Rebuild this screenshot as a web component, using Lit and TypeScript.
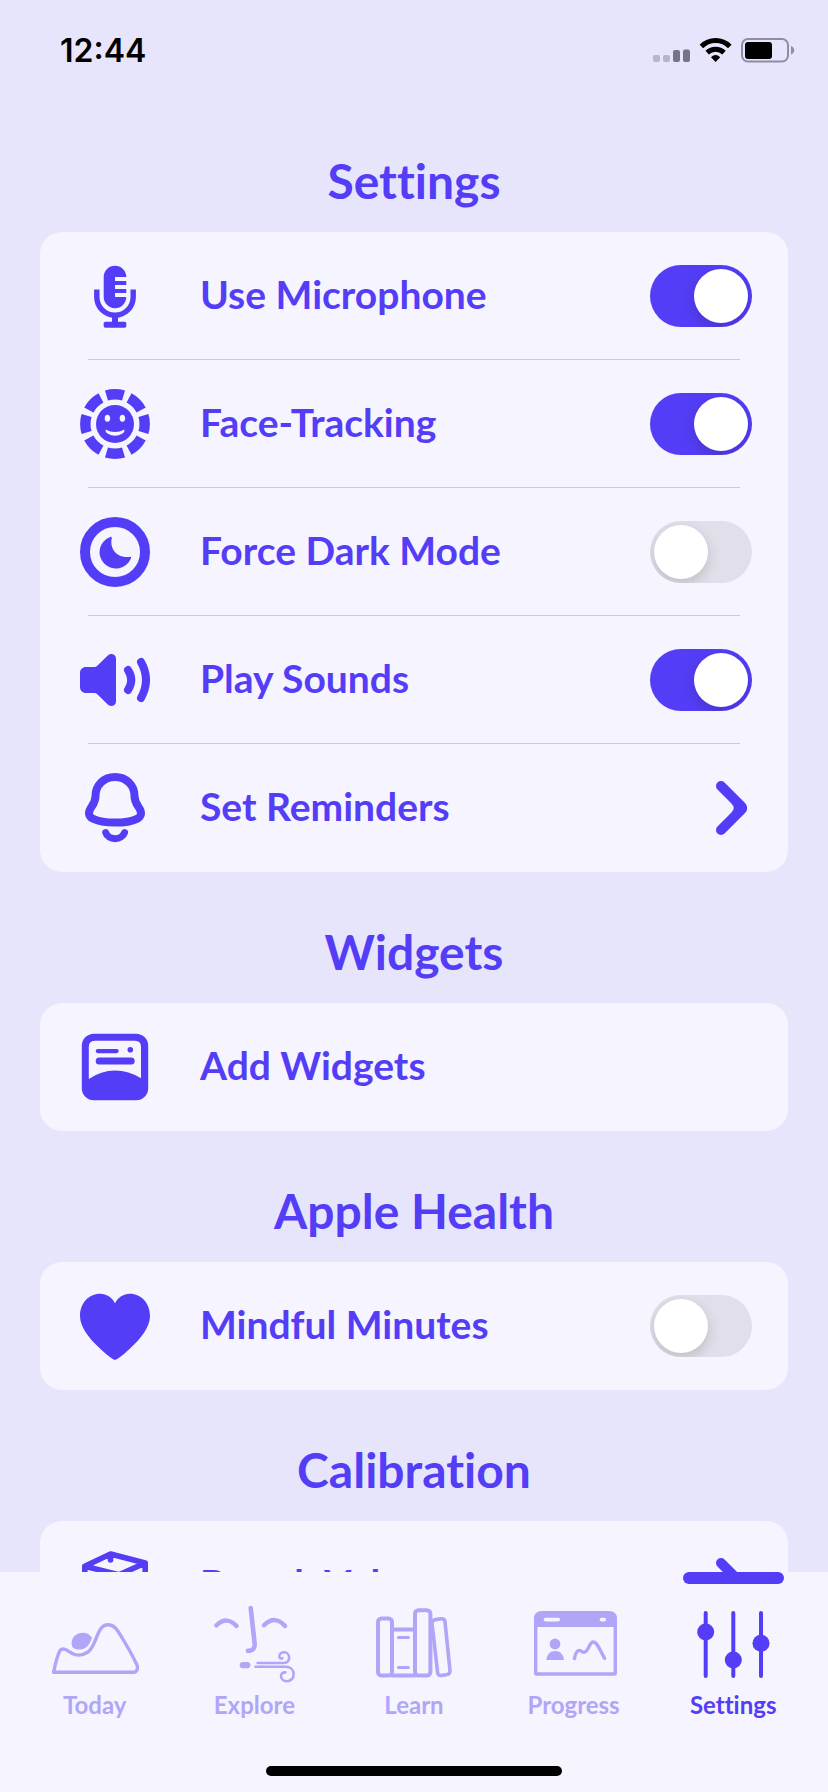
import { LitElement, html, svg, css, nothing, type TemplateResult } from "lit";
import { customElement, property, state } from "lit/decorators.js";
import { classMap } from "lit/directives/class-map.js";

type IconName = "mic" | "face" | "moon" | "sound" | "bell" | "widget" | "heart" | "box";
type TabName = "today" | "explore" | "learn" | "progress" | "settings";

interface Row {
  id: string;
  label: string;
  icon: IconName;
  kind: "toggle" | "link" | "action";
  on?: boolean;
}

interface Section {
  title: string;
  rows: Row[];
}

const SECTIONS: Section[] = [
  {
    title: "Settings",
    rows: [
      { id: "microphone", label: "Use Microphone", icon: "mic", kind: "toggle", on: true },
      { id: "face", label: "Face-Tracking", icon: "face", kind: "toggle", on: true },
      { id: "dark", label: "Force Dark Mode", icon: "moon", kind: "toggle", on: false },
      { id: "sounds", label: "Play Sounds", icon: "sound", kind: "toggle", on: true },
      { id: "reminders", label: "Set Reminders", icon: "bell", kind: "link" },
    ],
  },
  {
    title: "Widgets",
    rows: [{ id: "widgets", label: "Add Widgets", icon: "widget", kind: "action" }],
  },
  {
    title: "Apple Health",
    rows: [{ id: "mindful", label: "Mindful Minutes", icon: "heart", kind: "toggle", on: false }],
  },
  {
    title: "Calibration",
    rows: [{ id: "breath", label: "Breath Volume", icon: "box", kind: "link" }],
  },
];

const TABS: { id: TabName; label: string }[] = [
  { id: "today", label: "Today" },
  { id: "explore", label: "Explore" },
  { id: "learn", label: "Learn" },
  { id: "progress", label: "Progress" },
  { id: "settings", label: "Settings" },
];

// Row icons, each on a 70 x 70 grid.
const ROW_ICONS: Record<IconName, TemplateResult> = {
  mic: svg`
    <path class="fill" d="M23.7 16A11.3 11.3 0 0 1 46.3 16H35V20H46.3V24H35V28H46.3V32H35V36H46.3A11.3 11.3 0 0 1 23.7 35.7Z"/>
    <path class="line" stroke-width="5.4" stroke-linecap="butt" d="M16.8 28.5V36a18.2 18.2 0 0 0 36.4 0V28.5"/>
    <path class="fill" d="M32 55H38V62H32Z"/>
    <rect class="fill" x="23.7" y="60.7" width="22.6" height="6" rx="1.6"/>`,
  face: svg`
    <circle class="line" cx="35" cy="35" r="29.7" stroke-width="10.4" pathLength="360" stroke-linecap="butt"
      stroke-dasharray="33.5 11.5" stroke-dashoffset="16.75"/>
    <circle class="fill" cx="35" cy="35" r="19"/>
    <ellipse class="hole" cx="27.4" cy="29.3" rx="2.7" ry="3.5"/>
    <ellipse class="hole" cx="42.4" cy="29.3" rx="2.7" ry="3.5"/>
    <path class="hole" d="M25.6 40.4Q35 45.6 44.4 40.4Q45 42.6 42.5 44.5Q35 49 27.5 44.5Q25 42.6 25.6 40.4Z"/>`,
  moon: svg`
    <circle class="line" cx="35" cy="35" r="30" stroke-width="10"/>
    <path class="fill" d="M30.3 19.9C31.6 19.5 32 20.4 31.7 21.6C29.5 32.5 37.5 41.6 49.6 39.9C50.8 39.7 51.4 40.3 51 41.2A16.3 16.3 0 1 1 30.3 19.9Z"/>`,
  sound: svg`
    <path class="fill" d="M6 22H14.5C15.5 22 16.3 21.6 17 21L27.5 10.7C30.5 7.5 36 9 36 13.5V56.5C36 61 30.5 62.5 27.5 59.3L17 49C16.3 48.3 15.5 48 14.5 48H6C2.5 48 0 45.5 0 42V28C0 24.5 2.5 22 6 22Z"/>
    <path class="line" stroke-width="8" d="M48 25Q54.5 35 48 45"/>
    <path class="line" stroke-width="8" d="M61 17Q71 35 61 53"/>`,
  bell: svg`
    <path class="line" stroke-width="8" d="M35 4C24 4 15.5 12 15.5 23C15.5 29 13 31.5 10.5 35.5C8 40 8.5 43.5 13 45.8C19 48.8 27 49.6 35 49.6C43 49.6 51 48.8 57 45.8C61.5 43.5 62 40 59.5 35.5C57 31.5 54.5 29 54.5 23C54.5 12 46 4 35 4Z"/>
    <path class="line" stroke-width="7" d="M25.7 59.5C28 67.7 42 67.7 44.6 59.5"/>`,
  widget: svg`
    <rect class="fill" x="1.8" y="1.8" width="66.4" height="66.4" rx="12"/>
    <path class="hole" d="M8.8 14.7Q8.8 8.7 14.8 8.7H55Q61 8.7 61 14.7V46.3Q49 38.4 35 38.4Q21 38.4 8.8 47Z"/>
    <rect class="fill" x="15.7" y="17" width="23" height="4.2" rx="2.1"/>
    <rect class="fill" x="15.7" y="25.4" width="39" height="7" rx="3.5"/>
    <circle class="fill" cx="50.3" cy="17.8" r="2.8"/>`,
  heart: svg`
    <path class="fill" d="M35 69C34 69 28 65 21 58.5C9 47.5 0 36 0 25C0 12 9 2.7 20 2.7C27 2.7 32.5 7 35 12.3C37.5 7 43 2.7 50 2.7C61 2.7 70 12 70 25C70 36 61 47.5 49 58.5C42 65 36 69 35 69Z"/>`,
  box: svg`
    <path class="line" stroke-width="5.6" d="M30.5 4L65.2 13L39 24.8L4.8 16.2ZM4.8 16.2V54L39 66V24.8M65.2 13V52L39 66M30.5 4V10"/>`,
};

// Tab icons, each on an 88 x 84 grid.
const TAB_ICONS: Record<TabName, TemplateResult> = {
  today: svg`
    <path class="line" stroke-width="3.4" d="M2.6 72.2C4.5 63 6.5 55 9 50.5C11.5 47.5 14.5 48.8 18 51.5C24 56 31 56 37 52C46 45.5 45.5 24.8 57 24.8C64 24.8 67 31 71.5 38.5C77 47.5 82 56.5 86 65C87.5 69 85.5 72.2 82.5 72.2Z"/>
    <path class="fill" d="M20.7 42C21.5 36 26 32.8 31.5 32.7C36 32.7 39 34.5 41 37.8C39 44 35.5 49.6 28.5 49.6C22.5 49.6 20 47 20.7 42Z"/>`,
  explore: svg`
    <path class="line" stroke-width="4.4" d="M6.4 25.3Q17 15.5 26.5 26M54 25.3Q65 14.5 75 26"/>
    <path class="line" stroke-width="4.6" d="M40.7 8L44.6 43Q45.5 50.5 38 50.8"/>
    <rect class="fill" x="29.7" y="62" width="10.6" height="6.2" rx="3"/>
    <path class="line" stroke-width="2.6" d="M47.7 63H74C77.5 63 79.2 60.4 79.2 57.6C79.2 54.6 76.8 52.3 74 52.3C71.4 52.3 69.3 54 69.3 56.4C69.3 58.2 71 59 72.4 58.2"/>
    <path class="line" stroke-width="2.6" d="M45.5 66.8H75.5C80.5 66.8 83.7 70 83.7 74.2C83.7 78.4 80.6 81.2 76.8 81.2C73.2 81.2 71 78.6 71 76C71 73.6 72.8 72 75.4 72.4"/>`,
  learn: svg`
    <rect class="line" stroke-width="4" x="8" y="18.4" width="14" height="57.2" rx="3.6"/>
    <path class="line" stroke-width="4" d="M22 29.4H45M22 75.6H45"/>
    <path class="line" stroke-width="3" d="M28.4 37.4H38.4M28.4 67.4H38.4"/>
    <rect class="line" stroke-width="4" x="45" y="10.2" width="15.4" height="65.4" rx="3.6"/>
    <path class="line" stroke-width="3.6" d="M65.6 19.6L71.2 18.8Q74.6 18.6 75 21.8L80 70.4Q80.2 73.8 77.4 74.4L71.6 75.4Q68 75.8 67.6 72.6L62 23.4Q62.2 20.2 65.6 19.6Z"/>`,
  progress: svg`
    <path class="fill" d="M4 19Q4 11 12 11H79Q87 11 87 19V27H4Z"/>
    <rect class="line" stroke-width="3.4" x="5.7" y="20" width="79.6" height="54" rx="1"/>
    <rect class="hole" x="13.7" y="17.8" width="16.4" height="3.6" rx="1.8"/>
    <rect class="hole" x="69.7" y="17.8" width="6.4" height="3.6" rx="1.8"/>
    <circle class="fill" cx="25" cy="44" r="5.4"/>
    <path class="fill" d="M16.4 60C16.8 54.4 20.4 51 25.2 51C30 51 33.6 54.4 34 60Z"/>
    <path class="line" stroke-width="3.4" d="M44.4 58.6C45.4 54 46.4 50.6 49 50.4C51.4 50.2 52 52.8 54.6 52.2C59 51 59 42 63.4 42C67 42 69 48.4 74.6 58.4"/>`,
  settings: svg`
    <path class="line" stroke-width="4" d="M16.7 13V76M44.3 13V76M72 13V76"/>
    <circle class="fill" cx="16.7" cy="32" r="8.5"/>
    <circle class="fill" cx="44.3" cy="60" r="8.5"/>
    <circle class="fill" cx="72" cy="43.3" r="8.5"/>`,
};

const iconStyles = css`
  .fill {
    fill: currentColor;
  }
  .line {
    fill: none;
    stroke: currentColor;
    stroke-linejoin: round;
  }
  .line:not([stroke-linecap]) {
    stroke-linecap: round;
  }
  .hole {
    fill: var(--surface);
  }
`;

@customElement("settings-row")
class SettingsRow extends LitElement {
  static styles = [
    iconStyles,
    css`
      :host {
        display: block;
      }
      .row {
        box-sizing: border-box;
        width: 100%;
        min-height: 128px;
        display: grid;
        grid-template-columns: 70px 1fr auto;
        column-gap: 50px;
        align-items: center;
        padding: 0 36px 0 40px;
        border: 0;
        background: none;
        color: inherit;
        font: inherit;
        text-align: left;
        text-decoration: none;
        cursor: pointer;
      }
      .icon {
        display: block;
        width: 70px;
        height: 70px;
      }
      .label {
        padding-bottom: 4px;
        white-space: nowrap;
      }
      .switch {
        appearance: none;
        box-sizing: border-box;
        width: 102px;
        height: 62px;
        margin: 0;
        padding: 4px;
        border-radius: 31px;
        background: var(--track);
        display: flex;
        justify-content: flex-start;
        overflow: hidden;
        cursor: pointer;
      }
      .switch::before {
        content: "";
        width: 54px;
        height: 54px;
        border-radius: 50%;
        background: #fff;
        box-shadow: 0 5px 14px rgba(0, 0, 0, 0.16);
      }
      .switch:checked {
        background: var(--accent);
        justify-content: flex-end;
      }
      .chevron {
        display: block;
        width: 32px;
        height: 54px;
        margin-right: 4px;
      }
    `,
  ];

  @property({ attribute: false }) row!: Row;

  private body(end: unknown) {
    return html`
      <svg class="icon" viewBox="0 0 70 70" aria-hidden="true">${ROW_ICONS[this.row.icon]}</svg>
      <span class="label">${this.row.label}</span>
      ${end}
    `;
  }

  render() {
    const { id, kind, on } = this.row;
    if (kind === "toggle") {
      return html`<label class="row" for=${id}>
        ${this.body(html`<input class="switch" id=${id} type="checkbox" role="switch" .checked=${!!on} />`)}
      </label>`;
    }
    if (kind === "link") {
      return html`<a class="row" href="#${id}">
        ${this.body(html`<svg class="chevron" viewBox="0 0 32 54" aria-hidden="true">
          <path class="line" stroke-width="10" d="M5 5L25.5 25.5Q27 27 25.5 28.5L5 49" />
          <path class="fill" d="M15.5 22.4Q20 27 15.5 31.6L24 27Z" />
        </svg>`)}
      </a>`;
    }
    return html`<button class="row" type="button">${this.body(nothing)}</button>`;
  }
}

@customElement("app-root")
class AppRoot extends LitElement {
  static styles = [
    iconStyles,
    css`
      :host {
        --page: #e7e5fc;
        --surface: #f5f4ff;
        --accent: #543df6;
        --muted: #b0a6f8;
        --rule: #cbc8e6;
        --track: #e1e0ea;
        display: flex;
        flex-direction: column;
        height: 100vh;
        background: var(--page);
        color: var(--accent);
        font-family: Lato, "Open Sans", sans-serif;
        font-weight: 700;
        font-variant-ligatures: none;
      }
      .status {
        flex: none;
        box-sizing: border-box;
        height: 101px;
        display: flex;
        align-items: center;
        justify-content: space-between;
        padding: 0 33px 0 60px;
        color: #000;
      }
      .time {
        font: 600 32px/40px Inter, sans-serif;
      }
      .signals {
        display: block;
        width: 142px;
        height: 28px;
      }
      .weak {
        fill: #b7b5c9;
      }
      .strong {
        fill: #757388;
      }
      .shell {
        fill: none;
        stroke: #8f8da1;
        stroke-width: 2;
      }
      .nub {
        fill: #8f8da1;
      }
      main {
        flex: 1;
        min-height: 0;
        overflow-y: auto;
        scrollbar-width: none;
        padding: 0 40px;
      }
      .title {
        margin: 0;
        padding: 50px 0 21px;
        font-size: 48px;
        line-height: 60px;
        font-weight: 700;
        text-align: center;
      }
      .card {
        margin: 0;
        padding: 0;
        list-style: none;
        border-radius: 22px;
        background: var(--surface);
        font-size: 39px;
        line-height: 48px;
      }
      .item:not(:last-child) {
        background: linear-gradient(var(--rule), var(--rule)) no-repeat bottom / calc(100% - 96px) 1px;
      }
      .bar {
        flex: none;
        background: var(--surface);
        padding: 0 15px 16px;
      }
      .tabs {
        display: grid;
        grid-template-columns: repeat(5, 1fr);
      }
      .tab {
        position: relative;
        display: flex;
        flex-direction: column;
        align-items: center;
        gap: 6px;
        padding-top: 28px;
        color: var(--muted);
        font-size: 24px;
        line-height: 30px;
        text-decoration: none;
      }
      .tab.current {
        color: var(--accent);
      }
      .tab.current::before {
        content: "";
        position: absolute;
        top: 0;
        width: 101px;
        height: 12px;
        border-radius: 6px;
        background: var(--accent);
      }
      .glyph {
        display: block;
        width: 88px;
        height: 84px;
      }
      .home {
        width: 296px;
        height: 10px;
        margin: 46px auto 0;
        border-radius: 5px;
        background: #000;
      }
    `,
  ];

  @state() private current: TabName = "settings";

  private renderStatus() {
    return html`<header class="status">
      <span class="time">12:44</span>
      <svg class="signals" viewBox="0 0 142 28" role="img" aria-label="Signal, Wi-Fi and battery">
        <rect class="weak" x="0" y="18" width="7" height="7" rx="2" />
        <rect class="weak" x="10" y="18" width="7" height="7" rx="2" />
        <rect class="strong" x="20" y="13" width="7" height="12" rx="2" />
        <rect class="strong" x="30" y="12.4" width="7" height="12.6" rx="2" />
        <path class="line" stroke-width="5" stroke-linecap="butt"
          d="M48.4 9.4A20 20 0 0 1 76.8 9.4M54.2 15.6A12.2 12.2 0 0 1 71 15.6" />
        <path class="fill" d="M62.6 25L58 20.2Q62.6 16 67.2 20.2Z" />
        <rect class="shell" x="89" y="2" width="46" height="22.6" rx="6" />
        <rect class="fill" x="92" y="5" width="27" height="17" rx="3" />
        <path class="nub" d="M138 9Q141.2 10.4 141.2 13.3Q141.2 16.2 138 17.6Z" />
      </svg>
    </header>`;
  }

  render() {
    return html`
      ${this.renderStatus()}
      <main>
        ${SECTIONS.map(
          (section) => html`<section>
            <h2 class="title">${section.title}</h2>
            <ul class="card">
              ${section.rows.map(
                (row) => html`<li class="item"><settings-row .row=${row}></settings-row></li>`
              )}
            </ul>
          </section>`
        )}
      </main>
      <footer class="bar">
        <nav class="tabs" aria-label="Main">
          ${TABS.map(
            (tab) => html`<a
              class=${classMap({ tab: true, current: tab.id === this.current })}
              href="#${tab.id}"
              aria-current=${tab.id === this.current ? "page" : nothing}
              @click=${() => (this.current = tab.id)}
            >
              <svg class="glyph" viewBox="0 0 88 84" aria-hidden="true">${TAB_ICONS[tab.id]}</svg>
              <span>${tab.label}</span>
            </a>`
          )}
        </nav>
        <div class="home"></div>
      </footer>
    `;
  }
}
